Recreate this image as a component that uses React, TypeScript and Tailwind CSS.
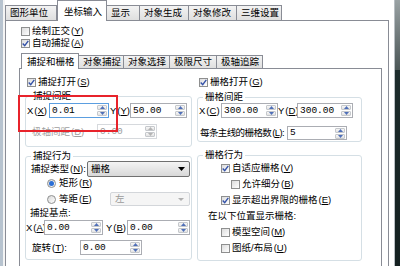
import React from "react";
import clsx from "clsx";

const Acc = ({ k }: { k: string }) => (
  <span className="ml-[1px]">
    (<span className="underline">{k}</span>)
  </span>
);

const Check = ({ on }: { on?: boolean }) => (
  <span className="w-[9px] h-[9px] shrink-0 border border-[#8e8f8f] bg-linear-to-br from-[#dcdcdc] to-white flex items-center justify-center">
    {on && (
      <svg width="7" height="7" viewBox="0 0 7 7">
        <path d="M0.7 3.5 L2.7 5.7 L6.3 0.8" stroke="#3452a8" strokeWidth="1.4" fill="none" />
      </svg>
    )}
  </span>
);

const Radio = ({ on }: { on?: boolean }) => (
  <span className="w-[9px] h-[9px] shrink-0 rounded-full border border-[#8e8f8f] bg-linear-to-br from-[#d8d8d8] to-white flex items-center justify-center">
    {on && <span className="w-[5px] h-[5px] rounded-full bg-[#2b6fd6]" />}
  </span>
);

const Tri = ({ up, off }: { up?: boolean; off?: boolean }) => (
  <svg width="5" height="3" viewBox="0 0 5 3">
    <path d={up ? "M0 3 L2.5 0 L5 3 Z" : "M0 0 L2.5 3 L5 0 Z"} fill={off ? "#b4b4b4" : "#4f6fb8"} />
  </svg>
);

interface SpinProps {
  v: string;
  cls: string;
  off?: boolean;
  focus?: boolean;
}

const Spin = ({ v, cls, off, focus }: SpinProps) => (
  <div
    className={clsx(
      "flex shrink-0 border bg-white",
      cls,
      focus ? "border-[#5b9ee0]" : off ? "border-[#d6d9dd]" : "border-[#abadb3]"
    )}
  >
    <span
      className={clsx(
        "flex-1 pl-[2px] flex items-center font-['Liberation_Mono',monospace] text-[9.5px]",
        off ? "text-[#9a9a9a]" : "text-black"
      )}
    >
      {v}
    </span>
    <div className="w-[12px] flex flex-col p-[1px] gap-[1px]">
      <span className="flex-1 flex items-center justify-center border border-[#c5c8cc] rounded-[1px] bg-linear-to-b from-[#f7f7f7] to-[#e2e2e2]">
        <Tri up off={off} />
      </span>
      <span className="flex-1 flex items-center justify-center border border-[#c5c8cc] rounded-[1px] bg-linear-to-b from-[#f7f7f7] to-[#e2e2e2]">
        <Tri off={off} />
      </span>
    </div>
  </div>
);

const Group = ({ title, cls, children }: { title: string; cls: string; children: React.ReactNode }) => (
  <fieldset className={clsx("border border-[#d5dfe5] rounded-[3px] min-w-0", cls)}>
    <legend className="ml-[5px] px-[2px] leading-[10px]">{title}</legend>
    {children}
  </fieldset>
);

const topTabs = [
  { t: "图形单位", w: "w-[52px]" },
  { t: "坐标输入", w: "w-[50px]", sel: true },
  { t: "显示", w: "w-[33px]" },
  { t: "对象生成", w: "w-[49px]" },
  { t: "对象修改", w: "w-[48px]" },
  { t: "三维设置", w: "w-[45px]" },
];

const innerTabs = [
  { t: "捕捉和栅格", w: "w-[58px]", sel: true },
  { t: "对象捕捉", w: "w-[45px]" },
  { t: "对象选择", w: "w-[46px]" },
  { t: "极限尺寸", w: "w-[47px]" },
  { t: "极轴追踪", w: "w-[46px]" },
];

export default function App() {
  return (
    <div className="relative w-[400px] h-[266px] overflow-hidden flex bg-white text-black text-[9.5px] leading-none whitespace-nowrap font-['Liberation_Sans','Noto_Sans_CJK_SC',sans-serif]">
      <div className="w-[3px] bg-[#b7c3cf]" />
      <div className="w-[2px] bg-[#f4f4f4]" />

      <div className="w-[384px] flex flex-col">
        {/* outer tabs */}
        <div className="h-[20px] flex items-end">
          {topTabs.map((tab) =>
            tab.sel ? (
              <div
                key={tab.t}
                className={clsx(
                  tab.w,
                  "relative z-10 h-[21px] -mb-px pl-[6px] pt-[1px] flex items-center bg-white border border-b-0 border-[#898c95]"
                )}
              >
                {tab.t}
              </div>
            ) : (
              <div
                key={tab.t}
                className={clsx(
                  tab.w,
                  "h-[15px] pl-[4px] flex items-center border border-b-0 border-l-0 first:border-l border-[#898c95] bg-linear-to-b from-[#f3f3f3] to-[#dfdfdf]"
                )}
              >
                {tab.t}
              </div>
            )
          )}
        </div>

        {/* outer panel */}
        <div className="flex-1 border border-b-0 border-[#898c95] bg-white flex flex-col pt-[4px]">
          <div className="pl-[15px] h-[12px] flex items-center gap-[2px]">
            <Check />
            <span>
              绘制正交
              <Acc k="Y" />
            </span>
          </div>
          <div className="pl-[15px] h-[12px] flex items-center gap-[2px]">
            <Check on />
            <span>
              自动捕捉
              <Acc k="A" />
            </span>
          </div>

          {/* inner tabs */}
          <div className="ml-[13px] mt-[4px] pl-[2px] h-[15px] flex items-end">
            {innerTabs.map((tab) =>
              tab.sel ? (
                <div
                  key={tab.t}
                  className={clsx(
                    tab.w,
                    "relative z-10 h-[16px] -mb-px pl-[5px] flex items-center bg-white border border-b-0 border-[#898c95]"
                  )}
                >
                  {tab.t}
                </div>
              ) : (
                <div
                  key={tab.t}
                  className={clsx(
                    tab.w,
                    "h-[13px] pl-[4px] flex items-center border border-b-0 border-l-0 border-[#898c95] bg-linear-to-b from-[#f3f3f3] to-[#dfdfdf]"
                  )}
                >
                  {tab.t}
                </div>
              )
            )}
          </div>

          {/* inner panel */}
          <div className="ml-[13px] w-[363px] flex-1 border border-b-0 border-[#898c95] pl-[5px] pt-[7px]">
            <div className="flex gap-[5px] h-[12px]">
              <div className="w-[167px] pl-[2px] flex items-center gap-[2px]">
                <Check on />
                <span>
                  捕捉打开
                  <Acc k="S" />
                </span>
              </div>
              <div className="w-[165px] pl-[2px] flex items-center gap-[2px]">
                <Check on />
                <span>
                  栅格打开
                  <Acc k="G" />
                </span>
              </div>
            </div>

            <div className="flex gap-[5px]">
              {/* left column */}
              <div className="w-[167px] flex flex-col">
                <Group title="捕捉间距" cls="mt-[3px] pb-[7px]">
                  <div className="mt-[2px] h-[15px] flex">
                    <span className="w-[23px] pl-[1px] flex items-center">
                      X<Acc k="X" />
                    </span>
                    <Spin v="0.01" cls="w-[60px]" focus />
                    <span className="w-[21px] pl-[1px] flex items-center">
                      Y<Acc k="Y" />
                    </span>
                    <Spin v="50.00" cls="w-[57px]" />
                  </div>
                  <div className="mt-[6px] h-[15px] flex">
                    <span className="w-[71px] pl-[6px] flex items-center text-[#a0a0a0]">
                      极轴间距
                      <Acc k="D" />
                    </span>
                    <Spin v="0.00" cls="w-[60px]" off />
                  </div>
                </Group>

                <Group title="捕捉行为" cls="mt-[4px] pb-[4px]">
                  <div className="h-[16px] flex">
                    <span className="w-[61px] pl-[5px] flex items-center">
                      捕捉类型
                      <Acc k="N" />:
                    </span>
                    <div className="w-[103px] flex items-center border border-[#707070] rounded-[2px] bg-linear-to-b from-[#f4f4f4] to-[#d8d8d8] pl-[3px] pr-[4px]">
                      <span className="flex-1">栅格</span>
                      <svg width="7" height="4" viewBox="0 0 7 4">
                        <path d="M0 0 L3.5 4 L7 0 Z" fill="#000" />
                      </svg>
                    </div>
                  </div>
                  <div className="h-[12px] pl-[21px] flex items-center gap-[3px]">
                    <Radio on />
                    <span>
                      矩形
                      <Acc k="R" />
                    </span>
                  </div>
                  <div className="mt-[3px] h-[14px] pl-[21px] flex items-center gap-[3px]">
                    <Radio />
                    <span>
                      等距
                      <Acc k="E" />
                    </span>
                    <div className="ml-auto mr-[1px] w-[80px] h-[14px] flex items-center border border-[#d3d6da] rounded-[2px] bg-[#f5f5f5] pl-[4px] pr-[5px] text-[#9a9a9a]">
                      <span className="flex-1">左</span>
                      <svg width="6" height="3" viewBox="0 0 6 3">
                        <path d="M0 0 L3 3 L6 0 Z" fill="#b0b0b0" />
                      </svg>
                    </div>
                  </div>
                  <div className="mt-[1px] h-[12px] pl-[4px] flex items-center">捕捉基点:</div>
                  <div className="mt-[1px] h-[15px] flex">
                    <span className="w-[18px] flex items-center">
                      X<Acc k="A" />
                    </span>
                    <Spin v="0.00" cls="w-[59px]" />
                    <span className="w-[24px] pl-[3px] flex items-center">
                      Y<Acc k="B" />
                    </span>
                    <Spin v="0.00" cls="w-[63px]" />
                  </div>
                  <div className="mt-[5px] h-[15px] flex">
                    <span className="w-[54px] pl-[6px] flex items-center">
                      旋转
                      <Acc k="T" />:
                    </span>
                    <Spin v="0.00" cls="w-[62px]" />
                  </div>
                </Group>
              </div>

              {/* right column */}
              <div className="w-[165px] flex flex-col">
                <Group title="栅格间距" cls="mt-[4px] pb-[1px]">
                  <div className="mt-[1px] h-[15px] flex">
                    <span className="w-[23px] pl-[1px] flex items-center">
                      X<Acc k="C" />
                    </span>
                    <Spin v="300.00" cls="w-[57px]" />
                    <span className="w-[19px] flex items-center">
                      Y<Acc k="D" />
                    </span>
                    <Spin v="300.00" cls="w-[56px]" />
                  </div>
                  <div className="mt-[8px] h-[14px] flex">
                    <span className="w-[89px] pl-[2px] flex items-center tracking-[-0.6px]">
                      每条主线的栅格数
                      <Acc k="L" />:
                    </span>
                    <Spin v="5" cls="w-[60px]" />
                  </div>
                </Group>

                <Group title="栅格行为" cls="mt-[8px] pb-[4px]">
                  <div className="h-[16px] pl-[23px] flex items-center gap-[2px]">
                    <Check on />
                    <span>
                      自适应栅格
                      <Acc k="V" />
                    </span>
                  </div>
                  <div className="h-[16px] pl-[33px] flex items-center gap-[2px]">
                    <Check />
                    <span>
                      允许细分
                      <Acc k="B" />
                    </span>
                  </div>
                  <div className="h-[16px] pl-[23px] flex items-center gap-[2px]">
                    <Check on />
                    <span>
                      显示超出界限的栅格
                      <Acc k="E" />
                    </span>
                  </div>
                  <div className="h-[16px] pl-[10px] flex items-center">在以下位置显示栅格:</div>
                  <div className="h-[16px] pl-[23px] flex items-center gap-[2px]">
                    <Check />
                    <span>
                      模型空间
                      <Acc k="M" />
                    </span>
                  </div>
                  <div className="h-[16px] pl-[23px] flex items-center gap-[2px]">
                    <Check />
                    <span>
                      图纸/布局
                      <Acc k="U" />
                    </span>
                  </div>
                </Group>
              </div>
            </div>
          </div>
        </div>
      </div>

      <div className="w-[5px] bg-white" />
      <div className="w-[1px] bg-[#b9bfc4]" />
      <div className="flex-1 flex flex-col">
        <div className="h-[70px] bg-linear-to-b from-[#9aa2a4] to-[#4b5656]" />
        <div className="flex-1 bg-linear-to-b from-[#1d2c2c] to-[#142020]" />
      </div>

      {/* red annotation box */}
      <div className="absolute left-[18px] top-[95px] w-[100px] h-[37px] border-2 border-[#e8232b]" />
    </div>
  );
}
